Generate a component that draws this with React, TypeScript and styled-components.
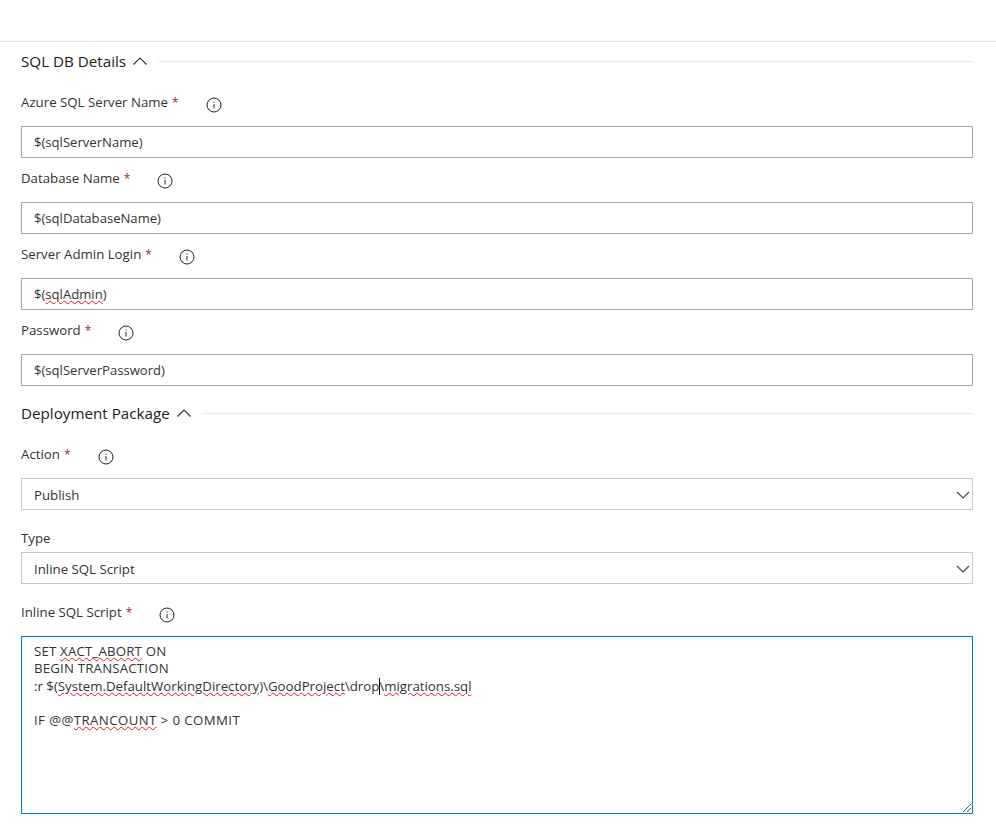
import React from "react";
import styled, { createGlobalStyle } from "styled-components";

const Global = createGlobalStyle`
  html, body { margin: 0; padding: 0; background: #fff; }
  #root { height: 826px; overflow: hidden; }
`;
const Page = styled.div`
  font-family: "Open Sans", "Noto Sans", "Liberation Sans", sans-serif;
  font-size: 13.25px;
  color: #333;
  background: #fff;
`;
const TopBar = styled.div`
  height: 41px;
  border-bottom: 1px solid #e1e1e1;
`;
const Form = styled.div`
  display: flex;
  flex-direction: column;
  padding: 0 23px 0 21px;
`;
const SectionHeader = styled.div<{ $top?: number }>`
  display: flex;
  align-items: center;
  height: 38px;
  margin-top: ${(p) => p.$top ?? 0}px;
  margin-bottom: 2px;
  color: #212121;
  font-size: 15.2px;
`;
const HeaderChevron = styled.svg`
  width: 14px;
  height: 8px;
  margin-left: 7px;
  flex: none;
`;
const HeaderRule = styled.div`
  flex: 1;
  height: 1px;
  background: #eaeaea;
  margin-left: 11px;
`;
const LabelRow = styled.div<{ $tight?: boolean; $top?: number }>`
  display: flex;
  align-items: center;
  height: 20px;
  margin-top: ${(p) => p.$top ?? 10}px;
  margin-bottom: ${(p) => (p.$tight ? 4 : 14)}px;
`;
const Required = styled.span`
  color: #a4262c;
  margin-left: 4px;
  font-size: 12px;
`;
const InfoIcon = styled.svg`
  width: 16px;
  height: 16px;
  margin-left: 27px;
  position: relative;
  top: 3px;
  flex: none;
`;
const Input = styled.div`
  box-sizing: border-box;
  height: 32px;
  display: flex;
  align-items: center;
  padding: 0 12px;
  border: 1px solid #a6a6a6;
  font-size: 13.1px;
  white-space: pre;
`;
const Select = styled(Input)`
  justify-content: space-between;
  border-color: #c8c8c8;
  padding: 1px 2px 0 12px;
  font-size: 13.25px;
`;
const SelectChevron = styled.svg`
  width: 14px;
  height: 8px;
`;
const ScriptBox = styled.div`
  box-sizing: border-box;
  height: 178px;
  padding: 6px 12px;
  border: 1px solid #0078d4;
  line-height: 17.33px;
  position: relative;
  white-space: pre;
`;
const ScriptLine = styled.div<{ $spacing?: number }>`
  min-height: 17.33px;
  letter-spacing: ${(p) => p.$spacing ?? 0}px;
`;
const Misspelled = styled.span`
  text-decoration: underline wavy #e81123 1px;
  text-underline-offset: 1px;
`;
const Caret = styled.span`
  display: inline-block;
  width: 1px;
  height: 17px;
  margin-right: -1px;
  background: #111;
  vertical-align: -4px;
`;
const ResizeGrip = styled.svg`
  position: absolute;
  right: 0;
  bottom: 0;
  width: 10px;
  height: 10px;
`;

const Info = () => (
  <InfoIcon viewBox="0 0 16 16" fill="none">
    <circle cx="8" cy="8" r="7" stroke="#222" strokeWidth="1" />
    <path d="M8 7v4.5M8 4.5v1.2" stroke="#222" strokeWidth="1" />
  </InfoIcon>
);

const Label = ({ text, required = true, tight, top }: { text: string; required?: boolean; tight?: boolean; top?: number }) => (
  <LabelRow $tight={tight} $top={top}>
    {text}
    {required && <Required>*</Required>}
    {required && <Info />}
  </LabelRow>
);

const Section = ({ title, top }: { title: string; top?: number }) => (
  <SectionHeader $top={top}>
    {title}
    <HeaderChevron viewBox="0 0 14 8" fill="none">
      <path d="M.5 7.5L7 1l6.5 6.5" stroke="#333" strokeWidth="1.1" />
    </HeaderChevron>
    <HeaderRule />
  </SectionHeader>
);

const Dropdown = ({ value }: { value: string }) => (
  <Select>
    {value}
    <SelectChevron viewBox="0 0 14 8" fill="none">
      <path d="M1 1l6 6 6-6" stroke="#444" strokeWidth="1.1" />
    </SelectChevron>
  </Select>
);

export default function App() {
  return (
    <Page>
      <Global />
      <TopBar />
      <Form>
        <Section title="SQL DB Details" />
        <Label text="Azure SQL Server Name" />
        <Input>$(sqlServerName)</Input>
        <Label text="Database Name" />
        <Input>$(sqlDatabaseName)</Input>
        <Label text="Server Admin Login" />
        <Input>
          $(<Misspelled>sqlAdmin</Misspelled>)
        </Input>
        <Label text="Password" />
        <Input>$(sqlServerPassword)</Input>
        <Section title="Deployment Package" top={8} />
        <Label text="Action" />
        <Dropdown value="Publish" />
        <Label text="Type" required={false} tight top={18} />
        <Dropdown value="Inline SQL Script" />
        <Label text="Inline SQL Script" top={18} />
        <ScriptBox>
          <ScriptLine $spacing={0.18}>
            SET <Misspelled>XACT_ABORT</Misspelled> ON
          </ScriptLine>
          <ScriptLine $spacing={0.18}>BEGIN TRANSACTION</ScriptLine>
          <ScriptLine>
            :r $(<Misspelled>System.DefaultWorkingDirectory</Misspelled>)\<Misspelled>GoodProject</Misspelled>\drop
            <Caret />\<Misspelled>migrations.sql</Misspelled>
          </ScriptLine>
          <ScriptLine />
          <ScriptLine $spacing={0.4}>
            IF @@<Misspelled>TRANCOUNT</Misspelled> &gt; 0 COMMIT
          </ScriptLine>
          <ResizeGrip viewBox="0 0 10 10" fill="none">
            <path d="M1 9l8-8M5 9l4-4" stroke="#555" strokeWidth="1" />
          </ResizeGrip>
        </ScriptBox>
      </Form>
    </Page>
  );
}
